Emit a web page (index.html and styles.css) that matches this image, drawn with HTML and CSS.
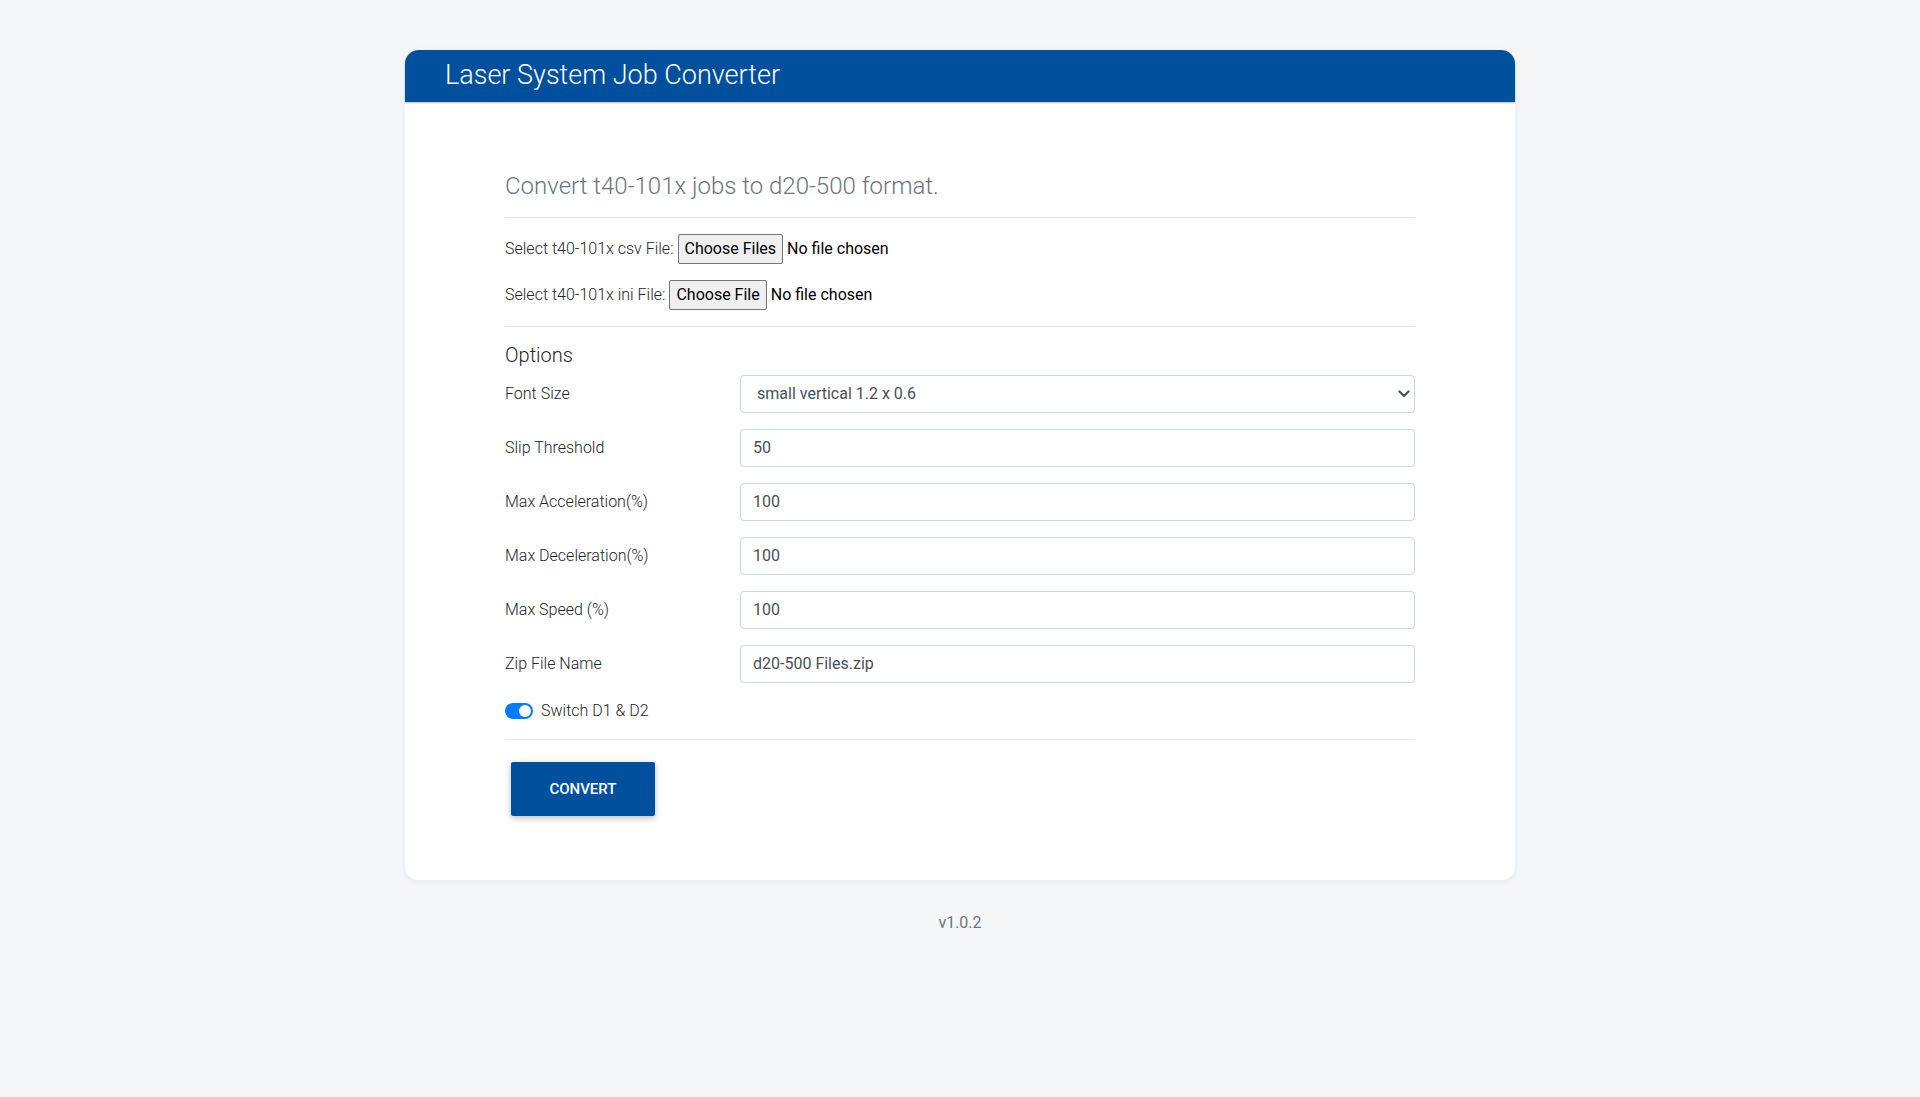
FILE: index.html
```html
<!DOCTYPE html>
<html lang="en">
<head>
<meta charset="utf-8">
<title>Laser System Job Converter</title>
<link rel="stylesheet" href="styles.css">
</head>
<body>
<main class="page">
  <section class="card">
    <header class="card-header">
      <h1 class="card-title">Laser System Job Converter</h1>
    </header>
    <div class="card-body">
      <h4 class="subtitle">Convert t40-101x jobs to d20-500 format.</h4>
      <hr class="rule rule-first">
      <div class="file-row">
        <span class="file-label">Select t40-101x csv File:</span>
        <button class="file-btn" type="button">Choose Files</button>
        <span class="file-status">No file chosen</span>
      </div>
      <div class="file-row">
        <span class="file-label">Select t40-101x ini File:</span>
        <button class="file-btn" type="button">Choose File</button>
        <span class="file-status">No file chosen</span>
      </div>
      <hr class="rule">
      <h5 class="options-title">Options</h5>
      <div class="form-row">
        <label class="form-label">Font Size</label>
        <div class="select-wrap">
          <select class="form-control select">
            <option>small vertical 1.2 x 0.6</option>
          </select>
          <svg class="caret" width="12" height="8" viewBox="0 0 12 8"><path d="M1.5 1.5 L6 6 L10.5 1.5" fill="none" stroke="#495057" stroke-width="2.2" stroke-linecap="round" stroke-linejoin="round"/></svg>
        </div>
      </div>
      <div class="form-row">
        <label class="form-label">Slip Threshold</label>
        <input class="form-control" type="text" value="50">
      </div>
      <div class="form-row">
        <label class="form-label">Max Acceleration(%)</label>
        <input class="form-control" type="text" value="100">
      </div>
      <div class="form-row">
        <label class="form-label">Max Deceleration(%)</label>
        <input class="form-control" type="text" value="100">
      </div>
      <div class="form-row">
        <label class="form-label">Max Speed (%)</label>
        <input class="form-control" type="text" value="100">
      </div>
      <div class="form-row">
        <label class="form-label">Zip File Name</label>
        <input class="form-control" type="text" value="d20-500 Files.zip">
      </div>
      <div class="switch-row">
        <span class="switch"><span class="knob"></span></span>
        <span class="switch-label">Switch D1 &amp; D2</span>
      </div>
      <hr class="rule rule-last">
      <button class="btn-convert" type="button">Convert</button>
    </div>
  </section>
  <p class="version">v1.0.2</p>
</main>
</body>
</html>
```

FILE: styles.css
```css
* { box-sizing: border-box; }
html, body { margin: 0; padding: 0; }
body {
  background: #f5f6f8;
  font-family: Roboto, "Liberation Sans", Arial, sans-serif;
  color: #212529;
  font-size: 16px;
  line-height: 1.5;
}
.page {
  padding-top: 50px;
  display: flex;
  flex-direction: column;
  align-items: center;
}
.card {
  width: 1110px;
  background: #fff;
  border-radius: 14px;
  box-shadow: 0 2px 8px rgba(0, 0, 0, 0.05);
}
.card-header {
  background: #00509e;
  border-radius: 14px 14px 0 0;
  padding: 9px 40px 10px;
  box-shadow: 0 1px 2px rgba(0, 0, 0, 0.25);
}
.card-title {
  margin: 0;
  color: #fff;
  font-size: 27px;
  font-weight: 300;
  line-height: 33px;
}
.card-body {
  padding: 70px 100px 58px;
}
.subtitle {
  margin: 0;
  font-size: 24px;
  font-weight: 300;
  line-height: 1.2;
  color: #6c757d;
}
.rule {
  border: 0;
  border-top: 1px solid rgba(0, 0, 0, 0.1);
  margin: 16px 0;
}
.rule-first { margin-top: 16px; margin-bottom: 16px; }
.file-row {
  display: flex;
  align-items: center;
  height: 30px;
  margin-bottom: 16px;
  white-space: pre;
}
.file-label {
  font-weight: 300;
  margin-right: 4px;
}
.file-btn {
  font-family: inherit;
  font-size: 16px;
  font-weight: 400;
  line-height: 26px;
  color: #000;
  background: #efefef;
  border: 1px solid #767676;
  border-radius: 2px;
  padding: 1px 6px;
  margin-right: 4px;
}
.file-status {
  color: #000;
  font-weight: 400;
}
.options-title {
  margin: 0 0 8px;
  font-size: 20px;
  font-weight: 300;
  line-height: 1.2;
}
.form-row {
  display: grid;
  grid-template-columns: 235px 1fr;
  align-items: center;
  margin-bottom: 16px;
}
.form-label {
  font-weight: 300;
  line-height: 1.5;
}
.form-control {
  display: block;
  width: 100%;
  height: 38px;
  padding: 6px 12px;
  font-family: inherit;
  font-size: 16px;
  font-weight: 400;
  line-height: 1.5;
  color: #495057;
  background: #fff;
  border: 1px solid #ced4da;
  border-radius: 4px;
  outline: none;
}
.select-wrap {
  position: relative;
}
.select {
  appearance: none;
  -webkit-appearance: none;
  padding-left: 16px;
}
.caret {
  position: absolute;
  right: 5px;
  top: 15px;
  pointer-events: none;
}
.switch-row {
  display: flex;
  align-items: center;
  height: 24px;
}
.switch {
  width: 28px;
  height: 16px;
  border-radius: 8px;
  background: #007bff;
  display: flex;
  align-items: center;
  justify-content: flex-end;
  padding: 0 2px;
  margin-right: 8px;
}
.knob {
  width: 12px;
  height: 12px;
  border-radius: 50%;
  background: #fff;
}
.switch-label {
  font-weight: 300;
}
.rule-last { margin-top: 16px; margin-bottom: 16px; }
.btn-convert {
  display: block;
  margin: 22px 6px 6px;
  height: 54.5px;
  padding: 0 38.4px;
  background: #00509e;
  color: #fff;
  border: 0;
  border-radius: 2px;
  font-family: inherit;
  font-size: 15px;
  font-weight: 500;
  text-transform: uppercase;
  box-shadow: 0 2px 5px 0 rgba(0, 0, 0, 0.16), 0 2px 10px 0 rgba(0, 0, 0, 0.12);
}
.version {
  margin: 31px 0 0;
  color: #6c757d;
  font-size: 16px;
  font-weight: 400;
  line-height: 24px;
}
```
